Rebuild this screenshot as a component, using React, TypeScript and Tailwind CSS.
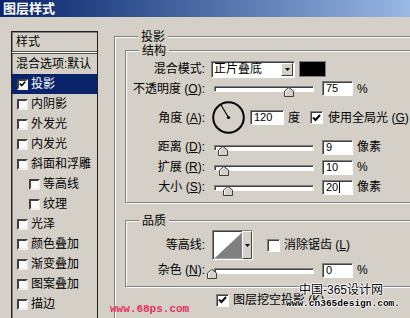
import type { ReactNode } from "react";

const uiFont = { fontFamily: '"Liberation Sans", "Noto Sans CJK SC", sans-serif' };

const styleItems = [
  { label: "投影", checked: true, active: true },
  { label: "内阴影" },
  { label: "外发光" },
  { label: "内发光" },
  { label: "斜面和浮雕" },
  { label: "等高线", sub: true },
  { label: "纹理", sub: true },
  { label: "光泽" },
  { label: "颜色叠加" },
  { label: "渐变叠加" },
  { label: "图案叠加" },
  { label: "描边" }
];

const sunken =
  "border border-t-[#808080] border-l-[#808080] border-r-white border-b-white shadow-[inset_1px_1px_0_#404040]";

function CheckMark() {
  return (
    <svg width="9" height="8" viewBox="0 0 9 8" className="block">
      <path d="M1 3.5 L3.5 6 L8 1" fill="none" stroke="#000" strokeWidth="2" />
    </svg>
  );
}

function ListCheck({ checked }: { checked?: boolean }) {
  return (
    <span className="flex h-[11px] w-[11px] shrink-0 items-center justify-center border-2 border-t-[#404040] border-l-[#404040] border-r-[#f0f0f0] border-b-[#f0f0f0] bg-white">
      {checked ? <CheckMark /> : null}
    </span>
  );
}

function Check({ checked }: { checked?: boolean }) {
  return (
    <span className={`flex h-[13px] w-[13px] shrink-0 items-center justify-center bg-white ${sunken}`}>
      {checked ? <CheckMark /> : null}
    </span>
  );
}

function GroupBox({ title, className, children }: { title: string; className?: string; children: ReactNode }) {
  return (
    <div className={`border border-[#808080] shadow-[inset_1px_1px_0_#fff,1px_1px_0_#fff] ${className ?? ""}`}>
      <div className="ml-[13px] -mt-[7px] w-fit bg-[#d4d0c8] px-[3px] text-[12px] leading-[14px]">{title}</div>
      {children}
    </div>
  );
}

function Key({ k }: { k: string }) {
  return (
    <>
      {" "}(<span className="underline">{k}</span>)
    </>
  );
}

function Field({ value, width = 31, caret }: { value: string; width?: number; caret?: boolean }) {
  return (
    <div
      className={`flex h-[15px] shrink-0 items-center bg-white pl-[3px] text-[11px] leading-none ${sunken}`}
      style={{ width }}
    >
      {value}
      {caret ? <span className="ml-[1px] h-[11px] w-[1px] bg-black" /> : null}
    </div>
  );
}

function Slider({ thumb }: { thumb: number }) {
  return (
    <div className="relative h-[15px] w-[111px] shrink-0">
      <div className={`ml-[3px] mt-[5px] h-[6px] w-[100px] bg-white ${sunken}`} />
      <svg width="10" height="10" viewBox="0 0 10 10" className="absolute top-[6px]" style={{ left: thumb - 5 }}>
        <path d="M0.5 9.5 V4 L5 0.5 L9.5 4 V9.5 Z" fill="#d4d0c8" stroke="#404040" />
        <path d="M1.5 8.5 V4.4 L5 1.7" fill="none" stroke="#fff" />
      </svg>
    </div>
  );
}

function Row({ label, h = 20, children }: { label: ReactNode; h?: number; children: ReactNode }) {
  return (
    <div className="flex items-center" style={{ height: h }}>
      <span className="w-[79px] shrink-0 text-right text-[12px] leading-none whitespace-nowrap">{label}</span>
      <div className="ml-[6px] flex items-center">{children}</div>
    </div>
  );
}

function SliderRow({ label, thumb, value, unit, caret }: { label: ReactNode; thumb: number; value: string; unit: string; caret?: boolean }) {
  return (
    <Row label={label}>
      <Slider thumb={thumb} />
      <Field value={value} caret={caret} />
      <span className="ml-[4px] text-[12px] leading-none">{unit}</span>
    </Row>
  );
}

function AngleDial() {
  return (
    <svg width="33" height="33" viewBox="0 0 33 33" className="ml-[1px] block">
      <circle cx="16.5" cy="16.5" r="15.3" fill="none" stroke="#000" strokeWidth="2" />
      <line x1="16.5" y1="16.5" x2="9" y2="4" stroke="#000" strokeWidth="1.2" />
      <circle cx="16.5" cy="16.5" r="1.6" fill="#000" />
    </svg>
  );
}

function DropArrow() {
  return (
    <svg width="5" height="3" viewBox="0 0 5 3" className="block">
      <path d="M0 0 H5 L2.5 3 Z" fill="#000" />
    </svg>
  );
}

export default function App() {
  return (
    <div className="relative h-[318px] w-[410px] overflow-hidden bg-[#d4d0c8] text-black" style={uiFont}>
      <div className="flex h-[17px] items-center bg-gradient-to-r from-[#0a246a] to-[#9ab8e4] pl-[3px] text-[13px] font-bold leading-none text-white">
        图层样式
      </div>

      <div className="flex pl-[11px] pt-[14px]">
        <div className="h-[290px] w-[87px] shrink-0 border border-[#202020] shadow-[inset_1px_1px_0_#808080]">
          <div className="flex h-[19px] items-center pl-[4px] text-[12px] leading-none">样式</div>
          <div className="h-[3px] border-y border-[#505050] bg-white" />
          <div className="flex h-[20px] items-center pl-[4px] text-[12px] leading-none whitespace-nowrap">混合选项:默认</div>
          {styleItems.map((item) => (
            <div
              key={item.label}
              className={`flex h-[20px] items-center gap-[3px] text-[12px] leading-none ${item.sub ? "pl-[17px]" : "pl-[5px]"} ${
                item.active ? "bg-[#0a246a] text-white" : ""
              }`}
            >
              <ListCheck checked={item.checked} />
              <span>{item.label}</span>
            </div>
          ))}
        </div>

        <GroupBox title="投影" className="ml-[16px] mt-[5px] h-[300px] w-[330px] shrink-0 pl-[10px]">
          <GroupBox title="结构" className="mt-[6px] w-[310px] pb-[5px]">
            <div className="mt-[1px]">
              <Row label="混合模式:">
                <div className={`flex h-[17px] w-[84px] items-center justify-between bg-white pr-[1px] ${sunken}`}>
                  <span className="pl-[2px] text-[12px] leading-none">正片叠底</span>
                  <span className="flex h-[13px] w-[12px] items-center justify-center border border-t-white border-l-white border-r-[#404040] border-b-[#404040] bg-[#d4d0c8]">
                    <DropArrow />
                  </span>
                </div>
                <div className="ml-[4px] h-[16px] w-[27px] border border-[#808080] bg-black" />
              </Row>
              <Row label={<>不透明度<Key k="O" />:</>} h={19}>
                <Slider thumb={78} />
                <Field value="75" />
                <span className="ml-[4px] text-[12px] leading-none">%</span>
              </Row>
              <Row label={<>角度<Key k="A" />:</>} h={39}>
                <AngleDial />
                <div className="ml-[5px]">
                  <Field value="120" width={34} />
                </div>
                <span className="ml-[4px] text-[12px] leading-none">度</span>
                <span className="ml-[10px]">
                  <Check checked />
                </span>
                <span className="ml-[5px] text-[12px] leading-none whitespace-nowrap">使用全局光<Key k="G" /></span>
              </Row>
              <SliderRow label={<>距离<Key k="D" />:</>} thumb={12} value="9" unit="像素" />
              <SliderRow label={<>扩展<Key k="R" />:</>} thumb={13} value="10" unit="%" />
              <SliderRow label={<>大小<Key k="S" />:</>} thumb={17} value="20" unit="像素" caret />
            </div>
          </GroupBox>

          <GroupBox title="品质" className="mt-[17px] w-[310px] pb-[7px]">
            <div className="mt-[2px]">
              <Row label="等高线:" h={30}>
                <div className={`ml-[1px] flex h-[30px] w-[41px] bg-white ${sunken}`}>
                  <svg width="29" height="27" viewBox="0 0 29 27" className="ml-[1px] mt-[1px] block">
                    <path d="M0 27 L29 0 V27 Z" fill="#808080" />
                  </svg>
                  <span className="ml-auto flex w-[10px] items-center justify-center border border-t-white border-l-white border-r-[#404040] border-b-[#404040] bg-[#d4d0c8]">
                    <DropArrow />
                  </span>
                </div>
                <span className="ml-[14px]">
                  <Check />
                </span>
                <span className="ml-[4px] text-[12px] leading-none whitespace-nowrap">消除锯齿<Key k="L" /></span>
              </Row>
              <div className="mt-[1px]">
                <Row label={<>杂色<Key k="N" />:</>} h={18}>
                  <Slider thumb={1} />
                  <Field value="0" />
                  <span className="ml-[4px] text-[12px] leading-none">%</span>
                </Row>
              </div>
            </div>
          </GroupBox>

          <div className="ml-[91px] mt-[6px] flex h-[14px] items-center gap-[4px]">
            <Check checked />
            <span className="text-[12px] leading-none whitespace-nowrap">图层挖空投影<Key k="K" /></span>
          </div>
        </GroupBox>
      </div>

      {/* watermarks over the dialog */}
      <div
        className="absolute left-[110px] top-[304px] text-[11px] font-bold leading-none text-[#e8305a]"
        style={{ fontFamily: '"Liberation Mono", monospace' }}
      >
        www.68ps.com
      </div>
      <div className="absolute left-[299px] top-[284px] text-[12px] leading-none text-black [text-shadow:1px_0_#fff,-1px_0_#fff,0_1px_#fff,0_-1px_#fff]">
        中国-365设计网
      </div>
      <div
        className="absolute left-[286px] top-[299px] text-[9.5px] font-bold leading-none text-black [text-shadow:1px_0_#fff,-1px_0_#fff,0_1px_#fff,0_-1px_#fff]"
        style={{ fontFamily: '"Liberation Mono", monospace' }}
      >
        www.cn365design.com.
      </div>
    </div>
  );
}
